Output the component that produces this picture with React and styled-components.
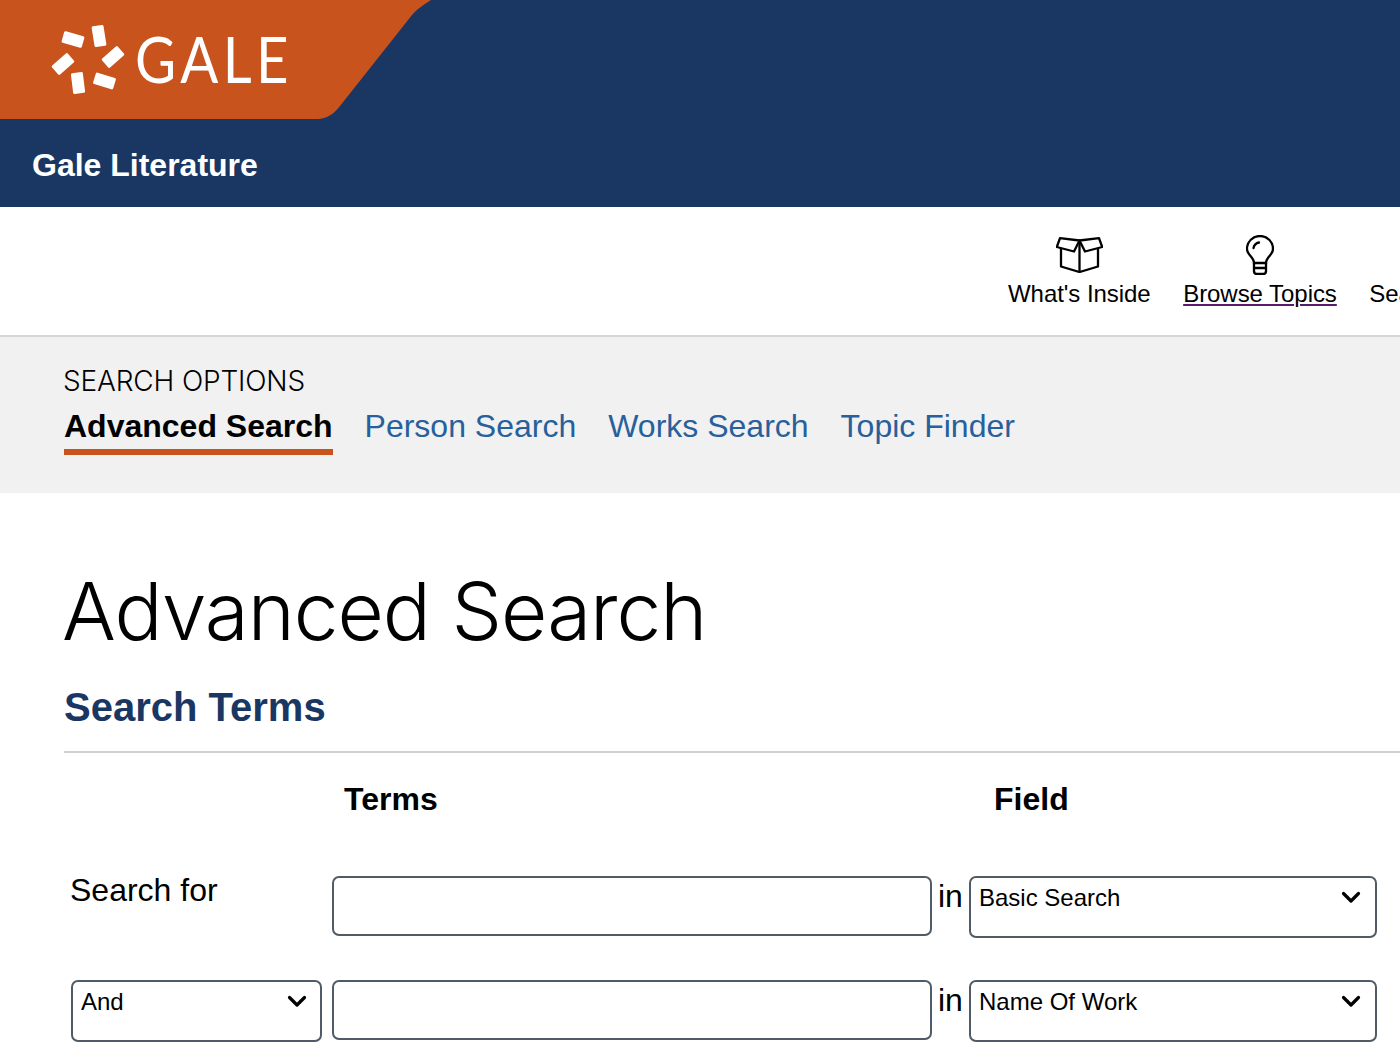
import React from 'react';
import styled, { createGlobalStyle } from 'styled-components';

const GlobalStyle = createGlobalStyle`
    html, body {
        margin: 0;
        height: 100%;
        overflow: hidden;
        background: #fff;
    }
    body {
        font-family: "Liberation Sans", Arial, sans-serif;
        color: #000;
    }
`;

const Header = styled.header`
    background: #1a3763;
    height: 207px;
`;

const LogoPlate = styled.div`
    width: 431px;
    height: 119px;
    background: #c9531c;
    clip-path: path('M0 0 H431 C425 4 418 8 412 15 L340 106 C334 114 326 119 318 119 H0 Z');
    display: flex;
    align-items: flex-start;
    padding: 22px 0 0 50px;
    box-sizing: border-box;
`;

const GaleWord = styled.span`
    font-family: Lato, sans-serif;
    font-size: 64px;
    line-height: 74px;
    color: #fff;
    margin-left: 7px;
    letter-spacing: 5px;
    transform: scaleX(0.88);
    transform-origin: left center;
`;

const ProductName = styled.div`
    color: #fff;
    font-weight: 700;
    font-size: 32px;
    line-height: 40px;
    padding: 26px 0 0 32px;
`;

const Toolbar = styled.nav`
    height: 130px;
    box-sizing: border-box;
    border-bottom: 2px solid #d6d6d6;
    display: flex;
    gap: 32.5px;
    padding: 28px 0 0 1008px;
    overflow: hidden;
`;

const ToolItem = styled.a`
    display: flex;
    flex-direction: column;
    align-items: center;
    flex-shrink: 0;
    font-size: 24px;
    line-height: 30px;
    letter-spacing: -0.05px;
    color: #000;
    white-space: nowrap;
    text-decoration: ${p => (p.$visited ? 'underline #5a1a6e' : 'none')};
`;

const ToolIcon = styled.span`
    display: flex;
    align-items: center;
    height: 40px;
    margin-bottom: 4px;
    text-decoration: none;
`;

const OptionsBand = styled.section`
    background: #f1f1f1;
    height: 156px;
    box-sizing: border-box;
    padding: 28px 0 0 64px;
`;

const OptionsLabel = styled.div`
    font-family: Inter, sans-serif;
    font-weight: 300;
    font-size: 28px;
    line-height: 32px;
    letter-spacing: -0.15px;
    margin-left: -1px;
`;

const Tabs = styled.div`
    display: flex;
    gap: 32px;
    margin-top: 10px;
`;

const Tab = styled.a`
    font-size: 32px;
    line-height: 38px;
    padding-bottom: 4px;
    height: 38px;
    font-weight: ${p => (p.$active ? 700 : 400)};
    color: ${p => (p.$active ? '#000' : '#27609b')};
    border-bottom: 6px solid ${p => (p.$active ? '#c9531c' : 'transparent')};
`;

const Main = styled.main`
    padding: 72px 0 0 64px;
`;

const PageTitle = styled.h1`
    margin: 0 0 0 -2px;
    font-family: Inter, sans-serif;
    font-weight: 300;
    font-size: 80px;
    line-height: 92px;
    letter-spacing: -1px;
`;

const SectionTitle = styled.h2`
    margin: 26px 0 0;
    padding-bottom: 20px;
    border-bottom: 2px solid #d0d0d0;
    color: #1a3763;
    font-size: 40px;
    line-height: 48px;
    font-weight: 700;
`;

const FormGrid = styled.div`
    margin: 27px 0 0 7px;
    display: grid;
    grid-template-columns: 261px 600px 37px 408px;
    row-gap: 42px;
`;

const ColumnHead = styled.div`
    font-size: 32px;
    line-height: 38px;
    font-weight: 700;
    margin-bottom: 16px;
    padding-left: ${p => p.$indent}px;
    grid-column: ${p => p.$column};
`;

const RowLabel = styled.div`
    font-size: 32px;
    line-height: 38px;
    margin: -5px 0 0 -1px;
`;

const TermInput = styled.input`
    box-sizing: border-box;
    width: 100%;
    height: 60px;
    border: 2px solid #4f5b66;
    border-radius: 7px;
    background: #fff;
    padding: 0 8px;
    font: 24px "Liberation Sans", Arial, sans-serif;
`;

const InWord = styled.div`
    font-size: 32px;
    line-height: 38px;
    padding: 1px 0 0 6px;
`;

const SelectWrap = styled.div`
    position: relative;
    width: ${p => p.$width}px;
    height: 62px;
`;

const Select = styled.select`
    appearance: none;
    box-sizing: border-box;
    width: 100%;
    height: 100%;
    border: 2px solid #4f5b66;
    border-radius: 7px;
    background: #fff;
    color: #000;
    padding: 0 40px 20px 8px;
    font: 24px "Liberation Sans", Arial, sans-serif;
`;

const Chevron = styled.svg`
    position: absolute;
    right: ${p => p.$right}px;
    top: 15px;
    pointer-events: none;
`;

const GaleMark = () => (
    <svg width="78" height="74" viewBox="50 22 78 74" fill="#fff" aria-hidden="true">
        <rect x="62.5" y="33.5" width="21" height="12" rx="1.5" transform="rotate(16 73 39.5)" />
        <rect x="93" y="25.5" width="12" height="21" rx="1.5" transform="rotate(-9 99 36)" />
        <rect x="102.5" y="51" width="21" height="12" rx="1.5" transform="rotate(-41 113 57)" />
        <rect x="94" y="75" width="21" height="12" rx="1.5" transform="rotate(17 104.5 81)" />
        <rect x="72" y="72.5" width="12" height="21" rx="1.5" transform="rotate(-7 78 83)" />
        <rect x="52.5" y="58" width="21" height="12" rx="1.5" transform="rotate(-41 63 64)" />
    </svg>
);

const BoxIcon = () => (
    <svg width="47" height="36" viewBox="0 0 47 36" fill="none" stroke="#000" strokeWidth="2.3" strokeLinejoin="round" aria-hidden="true">
        <path d="M5 11 V29.5 L23.5 35 L42 29.5 V11" />
        <path d="M23.5 3.5 V35" />
        <path d="M23.5 3.5 L4 1.2 L0.8 10 L18 14.5 Z" />
        <path d="M23.5 3.5 L43 1.2 L46.2 10 L29 14.5 Z" />
    </svg>
);

const BulbIcon = () => (
    <svg width="28" height="40" viewBox="0 0 28 40" fill="none" stroke="#000" strokeWidth="2.3" strokeLinecap="round" aria-hidden="true">
        <path d="M8 28 C8 22 1 20 1 14 A13 13 0 0 1 27 14 C27 20 20 22 20 28 Z" />
        <path d="M8 28 V36 Q8 39 11 39 H17 Q20 39 20 36 V28" />
        <path d="M8 33 H20" />
        <path d="M7.5 13 A7 7 0 0 1 13 7.5" />
    </svg>
);

const FieldSelect = ({ value, width, chevronRight }) => (
    <SelectWrap $width={width}>
        <Select defaultValue={value}>
            <option>{value}</option>
        </Select>
        <Chevron $right={chevronRight} width="20" height="13" viewBox="0 0 20 13" fill="none" stroke="#000" strokeWidth="3.2" strokeLinecap="round" strokeLinejoin="round" aria-hidden="true">
            <path d="M2.5 2.5 L10 10 L17.5 2.5" />
        </Chevron>
    </SelectWrap>
);

const App = () => {
    return (
        <>
            <GlobalStyle />
            <Header>
                <LogoPlate>
                    <GaleMark />
                    <GaleWord>GALE</GaleWord>
                </LogoPlate>
                <ProductName>Gale Literature</ProductName>
            </Header>

            <Toolbar>
                <ToolItem>
                    <ToolIcon><BoxIcon /></ToolIcon>
                    What's Inside
                </ToolItem>
                <ToolItem $visited>
                    <ToolIcon><BulbIcon /></ToolIcon>
                    Browse Topics
                </ToolItem>
                <ToolItem>
                    <ToolIcon />
                    Search History
                </ToolItem>
            </Toolbar>

            <OptionsBand>
                <OptionsLabel>SEARCH OPTIONS</OptionsLabel>
                <Tabs>
                    <Tab $active>Advanced Search</Tab>
                    <Tab>Person Search</Tab>
                    <Tab>Works Search</Tab>
                    <Tab>Topic Finder</Tab>
                </Tabs>
            </OptionsBand>

            <Main>
                <PageTitle>Advanced Search</PageTitle>
                <SectionTitle>Search Terms</SectionTitle>
                <FormGrid>
                    <ColumnHead $column="2" $indent={12}>Terms</ColumnHead>
                    <ColumnHead $column="4" $indent={25}>Field</ColumnHead>

                    <RowLabel>Search for</RowLabel>
                    <TermInput type="text" />
                    <InWord>in</InWord>
                    <FieldSelect value="Basic Search" width={408} chevronRight={16} />

                    <FieldSelect value="And" width={251} chevronRight={15} />
                    <TermInput type="text" />
                    <InWord>in</InWord>
                    <FieldSelect value="Name Of Work" width={408} chevronRight={16} />
                </FormGrid>
            </Main>
        </>
    );
};

export default App;
